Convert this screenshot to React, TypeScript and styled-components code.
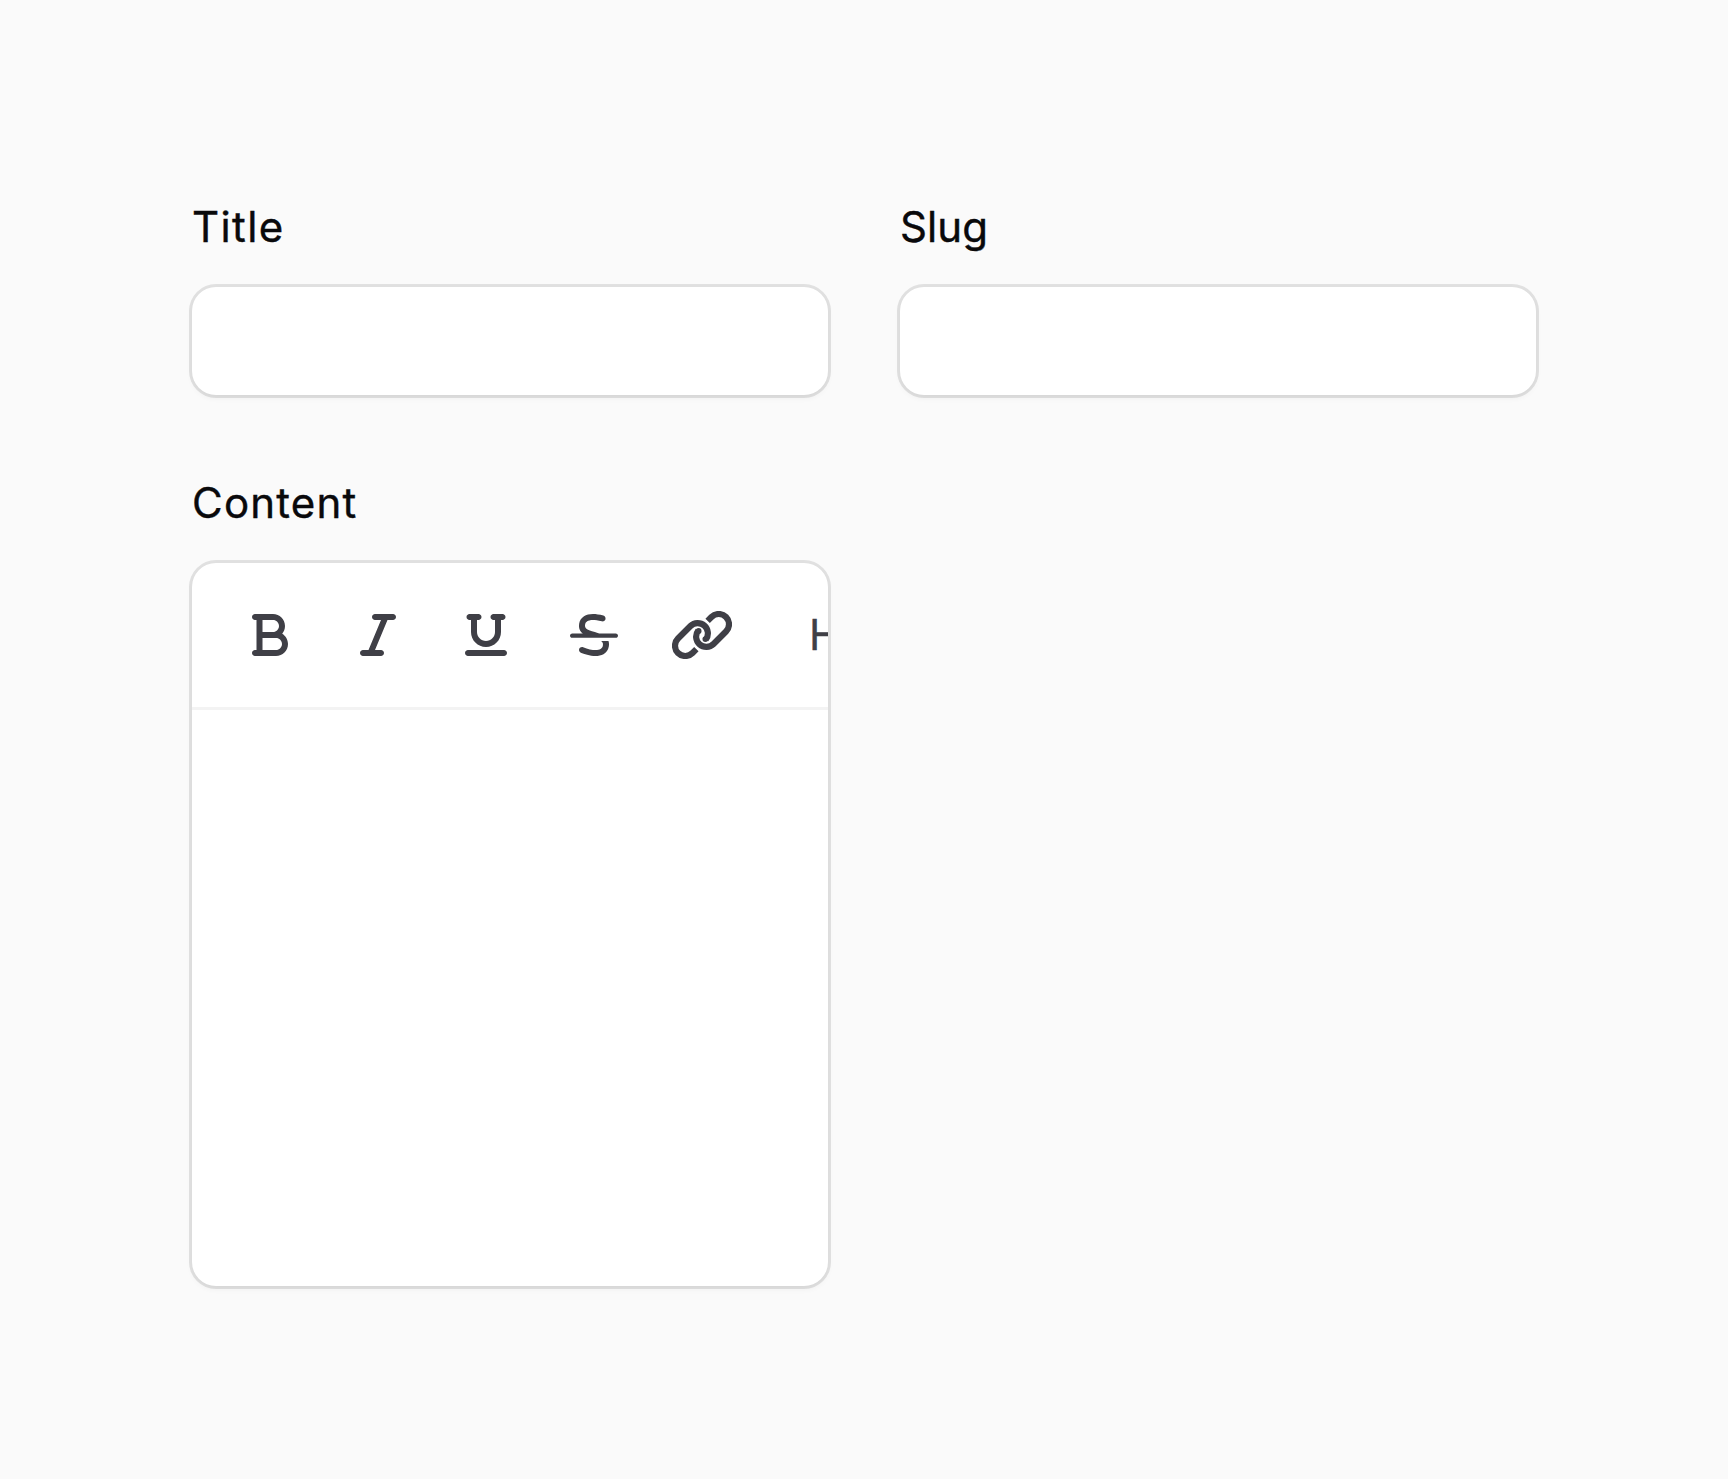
import React from "react";
import styled, { createGlobalStyle, css } from "styled-components";
import { FaBold, FaItalic, FaUnderline } from "react-icons/fa6";

const GlobalStyle = createGlobalStyle`
  *, *::before, *::after { box-sizing: border-box; }
  body {
    margin: 0;
    background: #fafafa;
    color: #09090b;
    font-family: Inter, "Open Sans", sans-serif;
  }
`;

const Form = styled.form`
  min-height: 1479px;
  padding: 191px 192px 0;
  display: grid;
  grid-template-columns: 1fr 1fr;
  gap: 72px;
  align-content: start;
`;

const Field = styled.div`
  display: grid;
  gap: 24px;
  min-width: 0;
`;

const Label = styled.label<{ $tracking: number }>`
  font-size: 42px;
  line-height: 72px;
  font-weight: 400;
  letter-spacing: ${(p) => p.$tracking}px;
  -webkit-text-stroke: 0.4px currentColor;
`;

const surface = css`
  background: #fff;
  border: 0;
  border-radius: 24px;
  box-shadow: 0 0 0 3px rgba(9, 9, 11, 0.1), 0 3px 6px rgba(0, 0, 0, 0.05);
`;

const Input = styled.input`
  ${surface}
  width: 100%;
  height: 108px;
  padding: 0 36px;
  font: inherit;
  font-size: 48px;
  outline: none;
`;

const Editor = styled.div`
  ${surface}
  height: 723px;
  overflow: hidden;
`;

const Toolbar = styled.div`
  display: flex;
  gap: 36px;
  padding: 24px 30px;
  border-bottom: 3px solid #f3f3f3;
`;

const ToolGroup = styled.div`
  display: flex;
  gap: 12px;
`;

const ToolButton = styled.button<{ $iconWidth?: number }>`
  flex: none;
  display: flex;
  align-items: center;
  justify-content: center;
  width: 96px;
  height: 96px;
  padding: 0;
  border: 0;
  border-radius: 24px;
  background: transparent;
  color: #3f3f46;

  svg {
    width: ${(p) => p.$iconWidth ?? 48}px;
    height: 48px;
  }
`;

const HeadingButton = styled(ToolButton)`
  justify-content: flex-start;
  padding-left: 23px;
  font: 400 42px/60px Inter, "Open Sans", sans-serif;
  -webkit-text-stroke: 0.4px currentColor;
`;

function StrikeIcon() {
  return (
    <svg viewBox="0 0 512 512" fill="currentColor" aria-hidden="true">
      <path d="M332.2 319.9c17.22 12.17 22.33 26.51 18.61 48.21c-3.031 17.59-10.88 29.34-24.72 36.99c-35.44 19.75-108.5 11.96-186-19.68c-16.34-6.686-35.03 1.156-41.72 17.53s1.188 35.05 17.53 41.71c31.75 12.93 95.69 35.37 157.6 35.37c29.62 0 58.81-5.156 83.72-18.96c30.81-17.09 50.44-45.46 56.72-82.11c3.998-23.27 2.168-42.58-3.488-59.05H332.2zM488 239.9l-176.5-.0309c-15.85-5.613-31.83-10.34-46.7-14.62c-85.47-24.62-110.9-39.05-103.7-81.33c2.5-14.53 10.16-25.96 22.72-34.03c20.47-13.15 64.06-23.84 155.4 .3438c17.09 4.531 34.59-5.654 39.13-22.74c4.531-17.09-5.656-34.59-22.75-39.12c-91.31-24.18-160.7-21.62-206.3 7.654C121.8 73.72 103.6 101.1 98.09 133.1C89.26 184.5 107.9 217.3 137.2 239.9L24 239.9c-13.25 0-24 10.75-24 23.1c0 13.25 10.75 23.1 24 23.1h464c13.25 0 24-10.75 24-23.1C512 250.7 501.3 239.9 488 239.9z" />
    </svg>
  );
}

function ChainHalf() {
  return (
    <>
      <path
        d="M380 105L421.2 64A109.4 109.4 0 0 1 576 218.8L442.8 352A109.4 109.4 0 0 1 279 208"
        fill="none"
        stroke="currentColor"
        strokeWidth="66"
      />
      <circle cx="284" cy="213" r="31" fill="currentColor" />
    </>
  );
}

function LinkIcon() {
  return (
    <svg viewBox="0 0 640 512" aria-hidden="true">
      <ChainHalf />
      <g transform="rotate(180 320 256)">
        <ChainHalf />
      </g>
    </svg>
  );
}

const tools = [
  { name: "Bold", Icon: FaBold, width: 36 },
  { name: "Italic", Icon: FaItalic, width: 36 },
  { name: "Underline", Icon: FaUnderline, width: 42 },
  { name: "Strikethrough", Icon: StrikeIcon, width: 48 },
  { name: "Link", Icon: LinkIcon, width: 60 },
];

export default function App() {
  return (
    <>
      <GlobalStyle />
      <Form>
        <Field>
          <Label htmlFor="title" $tracking={1.4}>Title</Label>
          <Input id="title" />
        </Field>
        <Field>
          <Label htmlFor="slug" $tracking={0.1}>Slug</Label>
          <Input id="slug" />
        </Field>
        <Field>
          <Label $tracking={1.2}>Content</Label>
          <Editor>
            <Toolbar>
              <ToolGroup>
                {tools.map(({ name, Icon, width }) => (
                  <ToolButton key={name} type="button" aria-label={name} $iconWidth={width}>
                    <Icon />
                  </ToolButton>
                ))}
              </ToolGroup>
              <ToolGroup>
                <HeadingButton type="button">H</HeadingButton>
              </ToolGroup>
            </Toolbar>
          </Editor>
        </Field>
      </Form>
    </>
  );
}
